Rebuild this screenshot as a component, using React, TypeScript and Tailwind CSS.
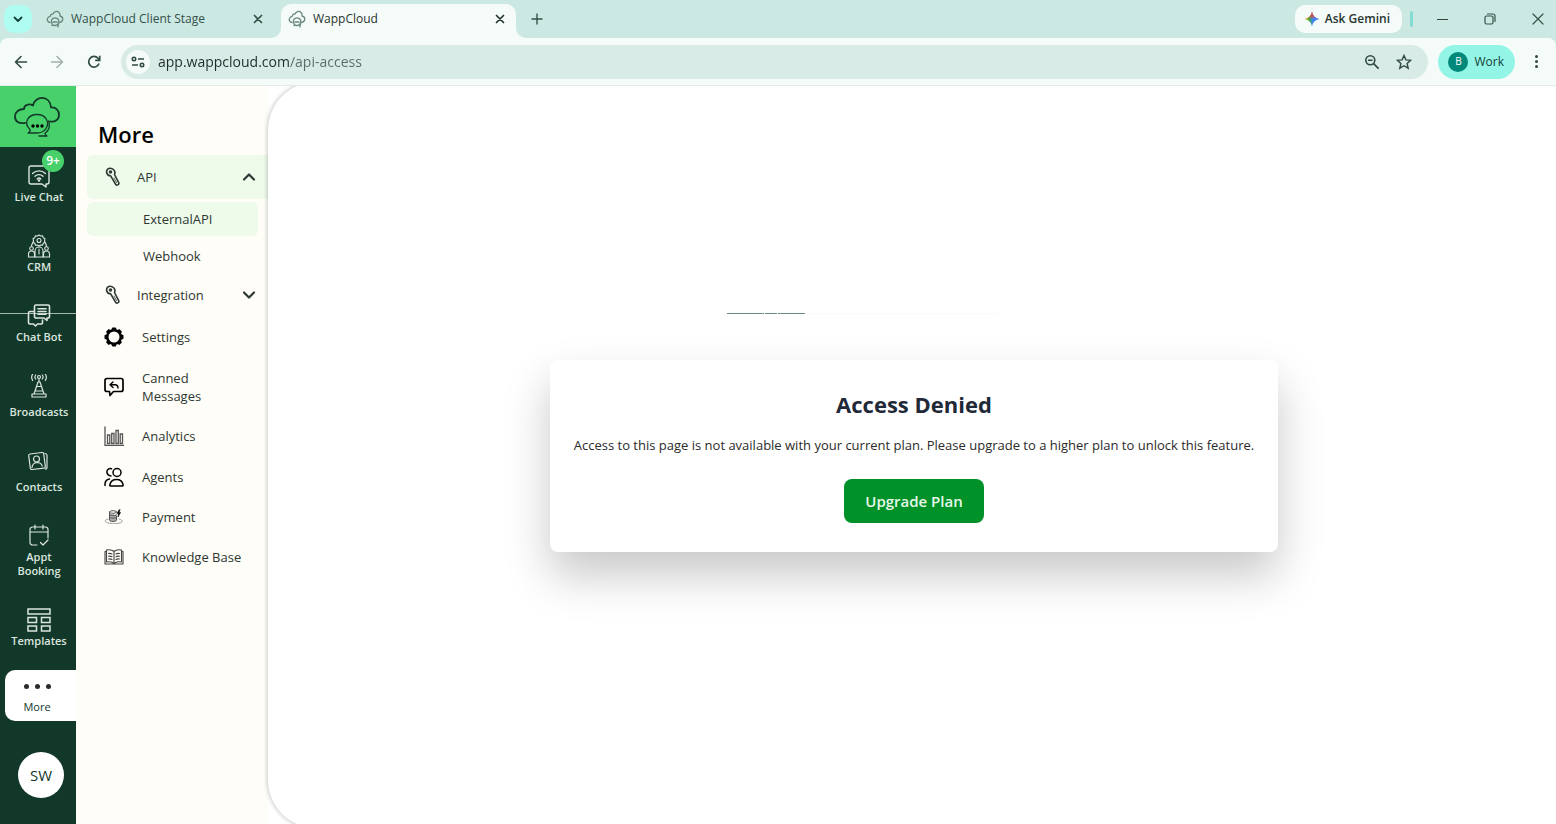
import type { ReactNode } from 'react';

const strokeProps = {
  fill: 'none',
  stroke: 'currentColor',
  strokeLinecap: 'round',
  strokeLinejoin: 'round',
} as const;

function CloudLogo({ className }: { className?: string }) {
  return (
    <svg viewBox="0 0 48 42" className={className} {...strokeProps} strokeWidth="1.8" aria-hidden="true">
      <path d="M12 27C5 28 2 25 2 20.500c0-4.500 4-7.500 9-7.500 0-4 5-6 9-3.500 2-10 17-11 18 2 5-.5 8 3 8 7.500 0 4.500-4 7.500-9 6.500" />
      <path strokeWidth="1.300" d="M15 37c2-1 2.500-2 2-3.500C10 27 15 18.500 24 18.500s13 8 9 14c-2 3-5 4.500-9 4.500z" />
      <path strokeWidth="1.300" d="M35.500 25c2.500 6-.5 10-3.500 12.500 0 1.500 1 2 2 2.500h-8" />
      <g fill="#000" stroke="none">
        <circle cx="20" cy="30" r="1.700" />
        <circle cx="24.500" cy="30" r="1.700" />
        <circle cx="29" cy="30" r="1.700" />
      </g>
    </svg>
  );
}

function TabLogo() {
  return (
    <svg viewBox="0 0 18 18" className="size-[18px] shrink-0 text-[#6a877e]" {...strokeProps} strokeWidth="1.3" aria-hidden="true">
      <path d="M4 12.500C1.500 12 .800 10 1.500 8.500 2 7 3 6.300 4.300 6.300 4.500 4.500 6 3.700 7 4c1-2.500 4-3.500 6-1.500 1 1 1.200 2.500 1 3.500 2 .500 3 2 2.700 3.700-.300 1.600-1.500 2.600-3 2.800" />
      <path d="M6 15.500c.600-.500.500-1 .200-1.700-2-2.800-.300-6 2.800-6 3.500 0 5 3.500 3 6-1 1.500-3 2-4.500 1.300zM12.500 13c.500 2-1 2.500-.500 4" />
      <path d="M7 12h4" />
    </svg>
  );
}

function CloseGlyph() {
  return (
    <svg viewBox="0 0 10 10" className="size-[10px]" {...strokeProps} strokeWidth="1.700" aria-hidden="true">
      <path d="m1.500 1.500 7 7M8.500 1.500l-7 7" />
    </svg>
  );
}

function TabStrip() {
  return (
    <header className="flex h-[38px] items-center bg-[#cce8e2] pl-1 text-[12px] text-[#33514a]">
      <button aria-label="Search tabs" className="flex size-7 items-center justify-center rounded-[10px] bg-[#affcf1] text-[#123f38]">
        <svg viewBox="0 0 10 10" className="size-[10px]" {...strokeProps} strokeWidth="1.800" aria-hidden="true">
          <path d="m1.500 3.500 3.500 3.500 3.500-3.500" />
        </svg>
      </button>

      <div className="flex w-[249px] items-center gap-[7px] pl-[14px] pr-[18px]">
        <TabLogo />
        <span className="flex-1 truncate">WappCloud Client Stage</span>
        <button aria-label="Close WappCloud Client Stage"><CloseGlyph /></button>
      </div>

      <div className="relative flex h-full w-[235px] items-end">
        <div className="flex h-[34px] w-full items-center gap-[7px] rounded-t-[10px] bg-[#f5fbf9] pb-[5px] pl-[7px] pr-[11px] text-[#26342f]">
          <TabLogo />
          <span className="flex-1 truncate">WappCloud</span>
          <button aria-label="Close WappCloud"><CloseGlyph /></button>
        </div>
        <svg viewBox="0 0 10 10" className="absolute -left-[10px] bottom-0 size-[10px]" fill="#f5fbf9" aria-hidden="true">
          <path d="M10 0v10H0A10 10 0 0 0 10 0z" />
        </svg>
        <svg viewBox="0 0 10 10" className="absolute -right-[10px] bottom-0 size-[10px]" fill="#f5fbf9" aria-hidden="true">
          <path d="M0 0v10h10A10 10 0 0 1 0 0z" />
        </svg>
      </div>

      <button aria-label="New tab" className="ml-[15px]">
        <svg viewBox="0 0 12 12" className="size-3" {...strokeProps} strokeWidth="1.400" aria-hidden="true">
          <path d="M6 1v10M1 6h10" />
        </svg>
      </button>

      <div className="ml-auto flex items-center">
        <button className="flex h-7 items-center gap-1 rounded-[10px] bg-[#f5fbf9] pr-3 pl-[9px] font-semibold text-[#26342f]">
          <svg viewBox="0 0 16 16" className="size-4" aria-hidden="true">
            <defs>
              <linearGradient id="spark" x1="0" y1="0.500" x2="1" y2="0.500">
                <stop offset="0" stopColor="#fbbc04" />
                <stop offset="0.350" stopColor="#34a853" />
                <stop offset="0.550" stopColor="#4285f4" />
                <stop offset="1" stopColor="#3186ff" />
              </linearGradient>
              <linearGradient id="sparkTop" x1="0" y1="0" x2="0" y2="1">
                <stop offset="0" stopColor="#ea4335" />
                <stop offset="0.300" stopColor="#ea4335" stopOpacity="0.800" />
                <stop offset="0.500" stopColor="#ea4335" stopOpacity="0" />
              </linearGradient>
            </defs>
            <path d="M8 .5C9 5 11 7 15.500 8 11 9 9 11 8 15.500 7 11 5 9 .5 8 5 7 7 5 8 .5z" fill="url(#spark)" />
            <path d="M8 .5C9 5 11 7 15.500 8 11 9 9 11 8 15.500 7 11 5 9 .5 8 5 7 7 5 8 .5z" fill="url(#sparkTop)" />
          </svg>
          <span className="pl-px">Ask Gemini</span>
        </button>
        <span className="ml-2 h-4 w-[3px] rounded-full bg-[#83dccf]" />
        <div className="ml-[11px] flex gap-3">
          <button aria-label="Minimize" className="flex h-8 w-9 items-center justify-center">
            <span className="h-px w-[11px] bg-[#33443f]" />
          </button>
          <button aria-label="Restore" className="flex h-8 w-9 items-center justify-center">
            <svg viewBox="0 0 12 12" className="size-3" {...strokeProps} strokeWidth="1.200" aria-hidden="true">
              <rect x="1" y="3" width="8" height="8" rx="1.500" />
              <path d="M3.500 1H9a2 2 0 0 1 2 2v5.500" />
            </svg>
          </button>
          <button aria-label="Close window" className="flex h-8 w-9 items-center justify-center">
            <svg viewBox="0 0 12 12" className="size-3" {...strokeProps} strokeWidth="1.200" aria-hidden="true">
              <path d="m1 1 10 10M11 1 1 11" />
            </svg>
          </button>
        </div>
      </div>
    </header>
  );
}

function Toolbar() {
  return (
    <div className="bg-[#cce8e2]">
      <div className="flex h-[48px] items-center rounded-t-lg border-b border-[#e4ecea] bg-[#f5fbf9] pr-[17px] pl-[14px] text-[#2f4a43]">
        <button aria-label="Back">
          <svg viewBox="0 0 14 14" className="size-[14px]" {...strokeProps} strokeWidth="1.600" aria-hidden="true">
            <path d="M12.500 7h-11M7 1.500 1.500 7 7 12.500" />
          </svg>
        </button>
        <button aria-label="Forward" className="ml-[22px] text-[#a3b1ac]">
          <svg viewBox="0 0 14 14" className="size-[14px]" {...strokeProps} strokeWidth="1.600" aria-hidden="true">
            <path d="M1.500 7h11M7 1.500 12.500 7 7 12.500" />
          </svg>
        </button>
        <button aria-label="Reload" className="ml-[23px]">
          <svg viewBox="0 0 14 14" className="size-[14px]" fill="none" stroke="currentColor" strokeWidth="1.700" aria-hidden="true">
            <path d="M12 8.500A5.300 5.300 0 1 1 11 3.300L12.500 5" />
            <path d="M12.700.800v4.500H8.200" />
          </svg>
        </button>

        <div className="ml-5 flex h-[34px] flex-1 items-center rounded-full bg-[#d9ebe6] pl-[5px] pr-4">
          <button aria-label="Site information" className="flex size-6 items-center justify-center rounded-full bg-[#f5fbf9]">
            <svg viewBox="0 0 14 14" className="size-[14px]" fill="none" stroke="currentColor" strokeWidth="1.600" aria-hidden="true">
              <circle cx="3" cy="4" r="1.700" />
              <path d="M7 4h6M1 10h6" />
              <circle cx="11" cy="10" r="1.700" />
            </svg>
          </button>
          <input
            aria-label="Address"
            defaultValue="app.wappcloud.com/api-access"
            className="ml-2 min-w-0 flex-1 bg-[linear-gradient(90deg,#202c28_131px,#566b65_131px)] bg-clip-text text-[14px] text-transparent outline-none"
          />
          <button aria-label="Zoom">
            <svg viewBox="0 0 16 16" className="size-4" fill="none" stroke="currentColor" strokeWidth="1.600" aria-hidden="true">
              <circle cx="6.300" cy="6.300" r="4.500" />
              <path d="m9.600 9.600 5 5M4 6.300h4.600" />
            </svg>
          </button>
          <button aria-label="Bookmark this tab" className="ml-4">
            <svg viewBox="0 0 16 16" className="size-4" fill="none" stroke="currentColor" strokeWidth="1.400" aria-hidden="true">
              <path d="m8 1.500 1.900 4.400 4.800.400-3.600 3.200 1.100 4.700L8 11.700l-4.200 2.500 1.100-4.700L1.300 6.300l4.800-.400z" />
            </svg>
          </button>
        </div>

        <button className="ml-[10px] flex h-[34px] items-center gap-[6px] rounded-full bg-[#93f5e6] pl-[10px] pr-[11px] text-[12px] text-[#17423a]">
          <span className="flex size-5 items-center justify-center rounded-full bg-[#00897b] text-[10px] text-white">B</span>
          Work
        </button>
        <button aria-label="Browser menu" className="ml-5 flex w-1 flex-col gap-[2px]">
          <span className="size-[3px] rounded-full bg-[#2f4a43]" />
          <span className="size-[3px] rounded-full bg-[#2f4a43]" />
          <span className="size-[3px] rounded-full bg-[#2f4a43]" />
        </button>
      </div>
    </div>
  );
}

const railItems: { label: string; height: string; badge?: string; icon: ReactNode }[] = [
  {
    label: 'Live Chat',
    height: 'h-10',
    badge: '9+',
    icon: (
      <>
        <path d="M4 2h16a2 2 0 0 1 2 2v14a2 2 0 0 1-2 2h-1v3l-4-3H4a2 2 0 0 1-2-2V4a2 2 0 0 1 2-2z" />
        <path d="M5.500 9.500c3.500-3.500 9.500-3.500 13 0M8 12.300c2.200-2.200 5.800-2.200 8 0M10.200 15c1-1 2.600-1 3.600 0" />
        <circle cx="12" cy="16.500" r=".6" />
      </>
    ),
  },
  {
    label: 'CRM',
    height: 'h-10',
    icon: (
      <g strokeWidth="1.100">
        <circle cx="12" cy="6.500" r="2" />
        <path d="M12 1l1.500 1 2-.3.800 2 1.700 1-.5 1.800.5 1.800-1.700 1-.8 2-2-.3-1.500 1-1.500-1-2 .3-.8-2-1.700-1 .5-1.800-.5-1.800 1.700-1 .8-2 2 .3z" />
        <path d="M8 23v-6c0-2 1.500-4 4-4s4 2 4 4v6M12 15v5M1.500 23v-3c0-2 1-3 3-3s3 1 3 3v3zM16.500 23v-3c0-2 1-3 3-3s3 1 3 3v3z" />
        <circle cx="4.500" cy="14.500" r="1.800" />
        <circle cx="19.500" cy="14.500" r="1.800" />
        <path d="M4.500 12.500C4.500 10 5.500 9 6.500 8M19.500 12.500c0-2.500-1-3.500-2-4.500M8 23h8" />
      </g>
    ),
  },
  {
    label: 'Chat Bot',
    height: 'h-10',
    icon: (
      <>
        <path d="M9 1h12a1.500 1.500 0 0 1 1.500 1.500v10A1.500 1.500 0 0 1 21 14h-1v2.500L17 14H9a1.500 1.500 0 0 1-1.500-1.500v-10A1.500 1.500 0 0 1 9 1z" strokeWidth="1.600" />
        <path d="M11 4.700h8M11 7.500h8M11 10.300h8" strokeWidth="1.600" />
        <path d="M7 7.500H3A1.500 1.500 0 0 0 1.500 9v9.500A1.500 1.500 0 0 0 3 20h3.500l2 2 2-2H14a1.500 1.500 0 0 0 1.500-1.500V16" strokeWidth="1.600" />
      </>
    ),
  },
  {
    label: 'Broadcasts',
    height: 'h-[45px]',
    icon: (
      <g strokeWidth="1.200">
        <circle cx="12" cy="3" r="1.500" />
        <path d="M8.700 1c-.8 1-.8 3 0 4M5.700 0c-1.300 2-1.300 4.500 0 6.500M15.300 1c.8 1 .8 3 0 4M18.300 0c1.300 2 1.300 4.500 0 6.500" />
        <path d="M12 5v3M11 8h2l4 12H7zM9.500 12.500h5M8 17h8M5 20h14v3H5z" />
      </g>
    ),
  },
  {
    label: 'Contacts',
    height: 'h-[45px]',
    icon: (
      <g strokeWidth="1.200">
        <path d="m3 5 12-1.500a1.500 1.500 0 0 1 1.700 1.300l1.600 12.700a1.500 1.500 0 0 1-1.300 1.700L5 20.500a1.500 1.500 0 0 1-1.700-1.300L1.700 6.600A1.500 1.500 0 0 1 3 5z" />
        <circle cx="9.500" cy="10" r="3" />
        <path d="M5 18.500c.3-3 2-4.700 4.700-5 2.600 0 5 1.300 5.500 3.700M18 4.500c1.400.2 2 .8 2 2v12c0 1-.6 1.600-1.600 1.600" />
      </g>
    ),
  },
  {
    label: 'Appt Booking',
    height: 'h-[54px]',
    icon: (
      <path d="M10 21H5.500A2.500 2.500 0 0 1 3 18.500v-13A2.500 2.500 0 0 1 5.500 3h13A2.500 2.500 0 0 1 21 5.500V14M3 8h18M8 1v4M16 1v4M13.500 18.500l2.500 2.500 5-5" strokeWidth="1.200" />
    ),
  },
  {
    label: 'Templates',
    height: 'h-10',
    icon: (
      <g strokeWidth="1.500" strokeLinejoin="miter">
        <path d="M1 1h22v5H1zM1 9.500h8.500v5H1zM14.500 9.500H23v5h-8.500zM1 18h8.500v5H1zM14.500 18H23v5h-8.500z" />
      </g>
    ),
  },
];

function Rail() {
  return (
    <nav aria-label="Main" className="relative flex w-[76px] shrink-0 flex-col items-center bg-[#12382a]">
      <a href="#home" aria-label="WappCloud home" className="flex h-[61px] w-full items-center justify-center bg-[#48d16a] pr-[2px] text-[#12382a]">
        <CloudLogo className="h-[42px] w-12" />
      </a>
      <div className="absolute inset-x-0 top-[227px] h-px bg-[#a5b8ae]" />
      <div className="flex w-full flex-col gap-[30px] pt-[17px] pr-1 pl-[6px] text-[#dbe5df]">
        {railItems.map((item) => (
          <a key={item.label} href="#nav" className={`relative flex flex-col items-center justify-between ${item.height}`}>
            <svg viewBox="0 0 24 24" className="size-6 shrink-0" {...strokeProps} strokeWidth="1.400" aria-hidden="true">
              {item.icon}
            </svg>
            {item.badge && (
              <span className="absolute -top-[14px] left-[36px] flex size-[22px] items-center justify-center rounded-full bg-[#48d16a] text-[12px] font-semibold text-white">
                {item.badge}
              </span>
            )}
            <span className="max-w-[62px] text-center text-[11px] leading-[14px] font-semibold">{item.label}</span>
          </a>
        ))}
      </div>
      <a href="#more" className="mt-[22px] flex h-[51px] w-[71px] flex-col items-center self-end rounded-l-[10px] bg-white pt-[14px] pr-[7px] text-[#12382a]">
        <span className="flex gap-[6px]">
          <span className="size-[5px] rounded-full bg-[#2b2b2b]" />
          <span className="size-[5px] rounded-full bg-[#2b2b2b]" />
          <span className="size-[5px] rounded-full bg-[#2b2b2b]" />
        </span>
        <span className="mt-[11px] text-[11px] leading-[14px] font-medium">More</span>
      </a>
      <button className="mt-[31px] ml-[6px] flex size-[46px] items-center justify-center rounded-full bg-white text-[15px] text-[#12382a]">SW</button>
    </nav>
  );
}

function WrenchIcon() {
  return (
    <svg viewBox="0 0 16 20" className="h-5 w-4" {...strokeProps} strokeWidth="1.600" aria-hidden="true">
      <path d="M6.500 1.500C3.500.5 1 3 1.700 5.700c.5 2 2.300 3 3.800 3l5 8.500c1 1.800 4 .5 3.200-1.500L9.500 7.500c1-2 .3-5-3-6z" />
      <circle cx="5.500" cy="5" r="1" />
      <path d="m9 11 2.500 4.500" strokeWidth=".8" />
    </svg>
  );
}

function Chevron({ d }: { d: string }) {
  return (
    <svg viewBox="0 0 14 14" className="ml-auto size-[14px]" {...strokeProps} strokeWidth="2.200" aria-hidden="true">
      <path d={d} />
    </svg>
  );
}

const gearTeeth = [0, 45, 90, 135, 180, 225, 270, 315];

const moreLinks: { label: string; height: string; icon: ReactNode }[] = [
  {
    label: 'Settings',
    height: 'h-10',
    icon: (
      <g stroke="none" fill="#000">
        <circle cx="10" cy="10" r="6.800" fill="none" stroke="#000" strokeWidth="2.600" />
        {gearTeeth.map((angle) => (
          <rect key={angle} x="7.800" y=".5" width="4.400" height="3" rx="1" transform={`rotate(${angle} 10 10)`} />
        ))}
      </g>
    ),
  },
  {
    label: 'Canned Messages',
    height: 'h-[59px]',
    icon: (
      <>
        <path d="M3 1.500h14a2 2 0 0 1 2 2v9a2 2 0 0 1-2 2h-7.500L6 18.500l-.5-4H3a2 2 0 0 1-2-2v-9a2 2 0 0 1 2-2z" strokeWidth="1.700" />
        <path d="M9 5 6 7.700 9 10.500M6.500 7.700H11c2 0 3 1.300 3 3.300" strokeWidth="1.400" />
      </>
    ),
  },
  {
    label: 'Analytics',
    height: 'h-10',
    icon: (
      <g strokeWidth="1.300" strokeLinejoin="miter" stroke="#555">
        <path d="M1 1v18.500h19" />
        <path d="M3.500 9h2.300v8.500H3.500zM7.700 7.500h2.300v10H7.700zM12 4.500h2.300v13H12zM16.200 8h2.300v9.500h-2.300z" />
      </g>
    ),
  },
  {
    label: 'Agents',
    height: 'h-[41px]',
    icon: (
      <g strokeWidth="1.500">
        <circle cx="13" cy="5.500" r="4" />
        <path d="M7.500 1.700c-3-.8-5 1.500-4.500 4 .4 2 2 3.200 4 3.300M6.500 19c-.7 0-.8-.5-.6-1.200C6.500 14.500 9 12.500 12.500 12.500s6 2 6.600 5.300c.1.700 0 1.200-.7 1.200zM1 18.500c-.3-3.500 1.500-6 4.500-6.500" />
      </g>
    ),
  },
  {
    label: 'Payment',
    height: 'h-10',
    icon: (
      <g strokeWidth="1" stroke="#555">
        <ellipse cx="9" cy="5" rx="3.500" ry="1.300" />
        <path d="M5.500 5v8c0 2 7 2 7 0V9M5.500 7.500c0 1.500 6 1.700 7 .3M5.500 10c0 1.500 6 1.700 7 .3" fill="#aaa" />
        <path d="m15 3-2 3.500h1.500L14 10l2.500-4.500H15L16 3z" fill="#000" stroke="#000" strokeWidth=".6" />
        <path d="M4 12c-5 1.500-3.500 4.500 6 4.500S20.500 13.500 15 12" stroke="#999" strokeDasharray="2 1" />
      </g>
    ),
  },
  {
    label: 'Knowledge Base',
    height: 'h-10',
    icon: (
      <g strokeWidth="1.100" stroke="#444">
        <path d="M10 4.500C8 2.500 5 2.500 2.500 3v12c2.500-.5 5.500-.5 7.500 1.500 2-2 5-2 7.500-1.500V3C15 2.500 12 2.500 10 4.500zM10 4.500v12" />
        <path d="M2.500 4.500H1V17h18V4.500h-1.500" />
        <path d="M4.500 6.500c1.300-.2 2.500 0 3.500.5M4.500 9.200c1.300-.2 2.500 0 3.500.5M4.500 12c1.300-.2 2.500 0 3.500.5M15.500 6.500c-1.300-.2-2.500 0-3.500.5M15.500 9.200c-1.300-.2-2.500 0-3.500.5M15.500 12c-1.300-.2-2.500 0-3.500.5" />
      </g>
    ),
  },
];

function MoreMenu() {
  return (
    <aside className="w-[192px] shrink-0 bg-[#fffdf7] pt-[33px] pl-[11px] text-[13px] leading-[18px] text-[#2d3733]">
      <h1 className="mb-[6px] pl-[11px] text-[22px] leading-[30px] font-semibold text-black">More</h1>
      <button className="flex h-11 w-full items-center rounded-l-md bg-[#effbea] pr-3 pl-[18px] text-left">
        <WrenchIcon />
        <span className="ml-4">API</span>
        <Chevron d="m2 9.500 5-5 5 5" />
      </button>
      <a href="#external" className="mt-[3px] mr-[10px] flex h-[34px] items-center rounded-md bg-[#effbea] pl-14">ExternalAPI</a>
      <a href="#webhook" className="mt-[3px] mr-[10px] flex h-[34px] items-center pl-14">Webhook</a>
      <button className="flex h-11 w-full items-center pr-3 pl-[18px] text-left">
        <WrenchIcon />
        <span className="ml-4">Integration</span>
        <Chevron d="m2 4.500 5 5 5-5" />
      </button>
      {moreLinks.map((link) => (
        <a key={link.label} href="#more" className={`flex items-center pr-5 pl-[17px] ${link.height}`}>
          <svg viewBox="0 0 20 20" className="mr-[18px] size-5 shrink-0 text-black" {...strokeProps} aria-hidden="true">
            {link.icon}
          </svg>
          {link.label}
        </a>
      ))}
    </aside>
  );
}

function AccessDenied() {
  return (
    <section className="flex flex-col items-center rounded-lg bg-white px-6 py-[29px] text-center shadow-[0_23px_46px_rgba(0,0,0,0.22)]">
      <h2 className="text-[22px] leading-[30px] font-bold text-[#1f2937]">Access Denied</h2>
      <p className="mt-4 text-[13px] leading-[20px] text-[#2b2b2b]">
        Access to this page is not available with your current plan. Please upgrade to a higher plan to unlock this feature.
      </p>
      <button className="mt-6 h-11 rounded-lg bg-[#009229] px-[21px] text-[15px] font-semibold text-[#e8f8ea]">Upgrade Plan</button>
    </section>
  );
}

export default function App() {
  return (
    <div className="flex min-h-screen flex-col bg-white font-['Open_Sans','Noto_Sans',sans-serif]">
      <TabStrip />
      <Toolbar />
      <div className="flex flex-1 overflow-hidden">
        <Rail />
        <MoreMenu />
        <main className="relative -my-1 flex flex-1 items-center justify-center rounded-l-[48px] bg-white pt-[2px] pl-1 shadow-[0_0_5px_rgba(0,0,0,0.3)]">
          <div className="absolute top-[231px] left-[459px] flex h-px w-[272px] gap-px">
            <span className="w-[37px] bg-[#6d8c80]" />
            <span className="w-3 bg-[#6d8c80]" />
            <span className="w-[27px] bg-[#6d8c80]" />
            <span className="flex-1 bg-[#fafafa]" />
          </div>
          <AccessDenied />
        </main>
      </div>
    </div>
  );
}
